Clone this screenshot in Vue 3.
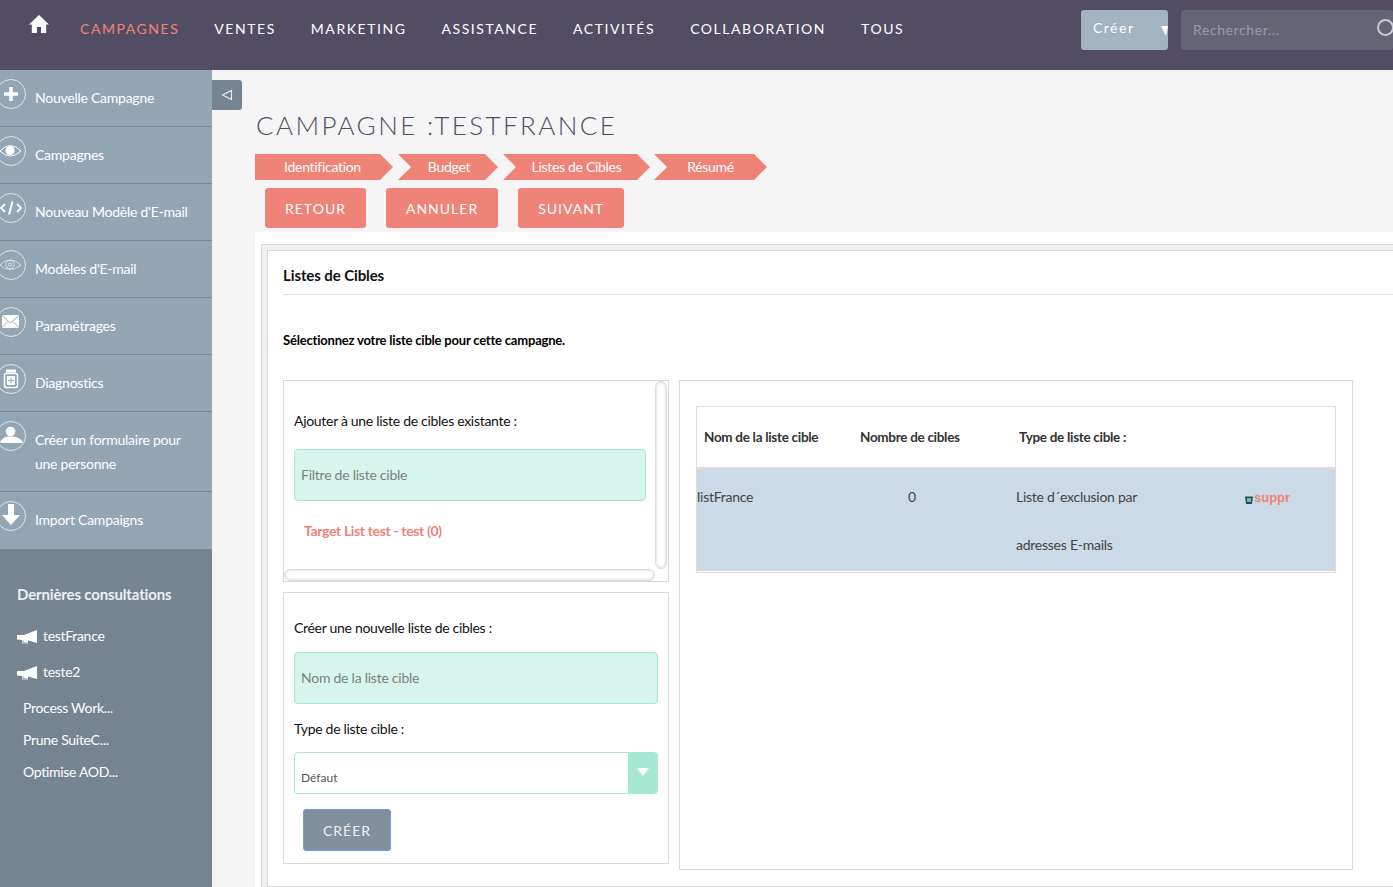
<template>
  <div class="page">
    <header class="topbar">
      <svg class="home" viewBox="0 0 20 18" width="20" height="18">
        <path d="M10 0 L20 9.5 H17.2 V18 H12 V12 H8 V18 H2.8 V9.5 H0 Z" fill="#fff" />
      </svg>
      <nav class="nav">
        <a v-for="(n, i) in navItems" :key="n" class="nav-link" :class="{ active: i === 0 }">{{ n }}</a>
      </nav>
      <div class="create-btn">
        <span>Créer</span>
        <i class="create-caret"></i>
      </div>
      <div class="search">
        <span>Rechercher...</span>
        <i class="search-ring"></i>
      </div>
    </header>

    <div class="body">
      <aside class="sidebar">
        <ul class="actions">
          <li v-for="a in actions" :key="a.label" class="action">
            <span class="action-icon">
              <svg viewBox="0 0 28 32" width="28" height="32" v-html="a.icon"></svg>
            </span>
            <span class="action-label">{{ a.label }}</span>
          </li>
        </ul>
        <div class="recent">
          <h3 class="recent-title">Dernières consultations</h3>
          <div v-for="r in recents" :key="r.label" class="recent-row" :class="{ plain: !r.icon }">
            <svg v-if="r.icon" class="horn" viewBox="0 0 21 14" width="21" height="14">
              <path d="M0 5 H7 L20 0 V13 L11 10.5 V13.5 H5 V10 L0 9.5 Z" fill="#fff" />
              <path d="M6 10.5 V12.8 H10.5" fill="none" stroke="#768390" stroke-width="0.8" />
            </svg>
            <span>{{ r.label }}</span>
          </div>
        </div>
      </aside>

      <main class="main">
        <button class="toggle">
          <svg viewBox="0 0 12 12" width="12" height="12">
            <path d="M10.5 1.5 V10.5 L1.5 6 Z" fill="none" stroke="#e8edf1" stroke-width="1.1" />
          </svg>
        </button>
        <h1 class="page-title">CAMPAGNE :TESTFRANCE</h1>
        <div class="steps">
          <span v-for="s in steps" :key="s.label" class="step" :class="s.cls">{{ s.label }}</span>
        </div>
        <div class="buttons">
          <button class="btn">RETOUR</button>
          <button class="btn">ANNULER</button>
          <button class="btn">SUIVANT</button>
        </div>

        <section class="sheet">
          <div class="frame">
            <div class="panel">
              <h2 class="panel-title">Listes de Cibles</h2>
              <p class="intro">Sélectionnez votre liste cible pour cette campagne.</p>
              <div class="columns">
                <div class="left-col">
                  <div class="box existing">
                    <label class="field-label first">Ajouter à une liste de cibles existante :</label>
                    <div class="text-field">Filtre de liste cible</div>
                    <a class="target-link">Target List test - test (0)</a>
                    <i class="scroll-v"></i>
                    <i class="scroll-h"></i>
                  </div>
                  <div class="box fresh">
                    <label class="field-label">Créer une nouvelle liste de cibles :</label>
                    <div class="text-field wide">Nom de la liste cible</div>
                    <label class="field-label type">Type de liste cible :</label>
                    <div class="select">
                      <span class="select-value">Défaut</span>
                      <span class="select-arrow"><i></i></span>
                    </div>
                    <button class="create-list">CRÉER</button>
                  </div>
                </div>
                <div class="box right-box">
                  <div class="table">
                    <div class="table-head">
                      <span class="th name">Nom de la liste cible</span>
                      <span class="th count">Nombre de cibles</span>
                      <span class="th type">Type de liste cible :</span>
                    </div>
                    <div class="table-row">
                      <span class="td name">listFrance</span>
                      <span class="td count">0</span>
                      <span class="td type">Liste d´exclusion par<br />adresses E-mails</span>
                      <span class="td remove">
                        <svg viewBox="0 0 8 8" width="8" height="8">
                          <path d="M0 0.5 H8 L7 8 H1 Z" fill="#0b5a58" />
                          <path d="M2 2 L6 6 M4 2 L6 4 M2 4 L4 6 M6 2 L2 6 M4 2 L2 4 M6 4 L4 6" stroke="#b9d6d4" stroke-width="0.7" />
                        </svg>
                        <a>suppr</a>
                      </span>
                    </div>
                  </div>
                </div>
              </div>
            </div>
          </div>
        </section>
      </main>
    </div>
  </div>
</template>

<script setup>
const navItems = ['CAMPAGNES', 'VENTES', 'MARKETING', 'ASSISTANCE', 'ACTIVITÉS', 'COLLABORATION', 'TOUS']

const ring = '<circle cx="12" cy="16" r="14.5" fill="none" stroke="#dfe5ea" stroke-width="1"/>'

const actions = [
  {
    label: 'Nouvelle Campagne',
    icon: ring + '<path d="M12 9 V23 M5 16 H19" stroke="#fff" stroke-width="3.6"/>',
  },
  {
    label: 'Campagnes',
    icon: ring + '<path d="M1 16 Q11 5 22 16 Q11 26 1 16 Z" fill="none" stroke="#fff" stroke-width="1"/><circle cx="11" cy="15.5" r="4.6" fill="#fff"/>',
  },
  {
    label: "Nouveau Modèle d'E-mail",
    icon: ring + '<path d="M6 12 L2 16 L6 20 M18 12 L22 16 L18 20" fill="none" stroke="#fff" stroke-width="2"/><path d="M13.5 9.5 L10 22.5" stroke="#fff" stroke-width="2"/>',
  },
  {
    label: "Modèles d'E-mail",
    icon: ring + '<path d="M1 16 Q11 6 22 16 Q11 25 1 16 Z" fill="none" stroke="#e6ebef" stroke-width="0.8"/><circle cx="11" cy="15.5" r="4.2" fill="none" stroke="#e6ebef" stroke-width="0.8"/><circle cx="11" cy="15.5" r="1.6" fill="none" stroke="#e6ebef" stroke-width="0.8"/>',
  },
  {
    label: 'Paramétrages',
    icon: ring + '<rect x="3" y="9" width="17" height="13" rx="1" fill="#fff"/><path d="M3 9.5 L11.5 17 L20 9.5 M3 21.5 L9 15.5 M20 21.5 L14 15.5" fill="none" stroke="#94a5b4" stroke-width="0.9"/>',
  },
  {
    label: 'Diagnostics',
    icon: ring + '<rect x="7" y="6.5" width="10" height="3" fill="#fff"/><rect x="5.5" y="10.5" width="13" height="14" rx="2" fill="none" stroke="#fff" stroke-width="1.5"/><rect x="8" y="13" width="8" height="9" fill="#fff"/><path d="M12 14.5 V20.5 M9 17.5 H15" stroke="#94a5b4" stroke-width="1"/>',
  },
  {
    label: 'Créer un formulaire pour une personne',
    icon: ring + '<circle cx="11.5" cy="11.5" r="4.8" fill="#fff"/><path d="M1 22 Q3 17.5 8.5 16.5 H15 Q21 17.5 24 22 Q24 23 22 23 H3 Q1 23 1 22 Z" fill="#fff"/>',
  },
  {
    label: 'Import Campaigns',
    icon: ring + '<path d="M9 4 H15 V15 H21 L12 25 L3 15 H9 Z" fill="#fff"/>',
  },
]

const recents = [
  { label: 'testFrance', icon: true },
  { label: 'teste2', icon: true },
  { label: 'Process Work...' },
  { label: 'Prune SuiteC...' },
  { label: 'Optimise AOD...' },
]

const steps = [
  { label: 'Identification', cls: 'first' },
  { label: 'Budget', cls: 'budget' },
  { label: 'Listes de Cibles', cls: 'lists' },
  { label: 'Résumé', cls: 'summary' },
]
</script>

<style>
html,
body {
  margin: 0;
  background: #f5f5f5;
  overflow: hidden;
}
</style>

<style scoped>
* {
  box-sizing: border-box;
}
.page {
  width: 1393px;
  height: 887px;
  overflow: hidden;
  font-family: Lato, "Open Sans", sans-serif;
  font-size: 14px;
  color: #222;
  display: flex;
  flex-direction: column;
}
.topbar {
  height: 70px;
  flex: none;
  background: #534d64;
  display: flex;
  align-items: flex-start;
  padding-left: 29px;
}
.home {
  margin-top: 15px;
}
.nav {
  display: flex;
  gap: 35px;
  margin-left: 31px;
  margin-top: 20px;
  width: 1001px;
}
.nav-link {
  color: #fff;
  font-size: 14px;
  line-height: 17px;
  letter-spacing: 1.55px;
  white-space: nowrap;
}
.nav-link.active {
  color: #f08377;
}
.create-btn {
  position: relative;
  width: 87px;
  height: 40px;
  margin-top: 10px;
  background: #a3b3bf;
  border-radius: 3px;
  color: #fff;
  font-size: 14px;
  letter-spacing: 1.5px;
  line-height: 36px;
  padding-left: 12px;
}
.create-caret {
  position: absolute;
  right: 0;
  top: 16px;
  width: 0;
  height: 0;
  border-left: 5px solid transparent;
  border-right: 2px solid transparent;
  border-top: 10px solid #fff;
}
.search {
  position: relative;
  width: 212px;
  height: 40px;
  margin-top: 10px;
  margin-left: 13px;
  background: #646574;
  border-radius: 3px;
  color: #9b98ac;
  font-size: 14px;
  letter-spacing: 0.6px;
  line-height: 40px;
  padding-left: 12px;
  overflow: hidden;
}
.search-ring {
  position: absolute;
  left: 196px;
  top: 9px;
  width: 17px;
  height: 17px;
  border: 2px solid #c9c9d0;
  border-radius: 50%;
}
.body {
  flex: 1;
  display: flex;
  min-height: 0;
}
.sidebar {
  width: 212px;
  flex: none;
  display: flex;
  flex-direction: column;
  background: #768390;
}
.actions {
  list-style: none;
  margin: 0;
  padding: 0;
  background: #94a5b4;
}
.action {
  position: relative;
  min-height: 57px;
  padding: 16px 8px 15px 35px;
  border-bottom: 1px solid #788895;
  color: #fff;
  font-size: 14px;
  line-height: 24px;
  letter-spacing: -0.25px;
}
.action:last-child {
  border-bottom: 0;
  height: 57px;
}
.action-icon {
  position: absolute;
  left: -1px;
  top: 8px;
  line-height: 0;
}
.action-icon svg {
  overflow: visible;
}
.recent {
  flex: 1;
  padding: 36px 0 0 17px;
}
.recent-title {
  margin: 0 0 23px;
  color: #edf0f2;
  font-size: 15px;
  line-height: 18px;
  font-weight: 700;
  letter-spacing: -0.15px;
}
.recent-row {
  display: flex;
  align-items: center;
  gap: 5px;
  height: 18px;
  margin-bottom: 18px;
  color: #fff;
  font-size: 14px;
  letter-spacing: -0.3px;
}
.recent-row.plain {
  padding-left: 6px;
  margin-bottom: 14px;
}
.horn {
  margin-top: 3px;
}
.main {
  position: relative;
  flex: 1;
  min-width: 0;
  background: #f5f5f5;
  padding-left: 43px;
}
.toggle {
  position: absolute;
  left: 0;
  top: 10px;
  width: 30px;
  height: 30px;
  padding: 0;
  border: 0;
  background: #768390;
  border-radius: 0 3px 3px 0;
  display: flex;
  align-items: center;
  justify-content: center;
}
.page-title {
  margin: 0;
  padding: 37px 0 0 1px;
  height: 84px;
  color: #534d64;
  font-size: 26px;
  line-height: 36px;
  font-weight: 300;
  letter-spacing: 2.4px;
  white-space: nowrap;
}
.steps {
  display: flex;
  height: 26px;
  color: #fff;
  font-size: 14px;
  line-height: 26px;
  letter-spacing: -0.3px;
}
.step {
  background: #f08377;
  text-align: center;
  clip-path: polygon(0 0, calc(100% - 13px) 0, 100% 50%, calc(100% - 13px) 100%, 0 100%, 13px 50%);
}
.step.first {
  width: 138px;
  padding-right: 3px;
  clip-path: polygon(0 0, calc(100% - 13px) 0, 100% 50%, calc(100% - 13px) 100%, 0 100%);
}
.step.budget {
  width: 100px;
  margin-left: 5px;
  padding-left: 2px;
}
.step.lists {
  width: 147px;
  margin-left: 5px;
}
.step.summary {
  width: 113px;
  margin-left: 4px;
}
.buttons {
  display: flex;
  gap: 20px;
  padding: 8px 0 4px 10px;
}
.btn {
  height: 40px;
  padding: 0 20px;
  border: 0;
  border-radius: 3px;
  background: #f08377;
  color: #fff;
  font-family: inherit;
  font-size: 14px;
  letter-spacing: 1px;
}
.sheet {
  background: #fff;
  height: 655px;
  padding: 12px 0 0 6px;
}
.frame {
  height: 643px;
  width: 1200px;
  border: 1px solid #d8d8d8;
  border-bottom: 0;
  background: #f0f0f0;
  padding: 5px 0 0 5px;
}
.panel {
  height: 637px;
  background: #fff;
  border: 1px solid #d8d8d8;
  padding: 0 0 0 15px;
}
.panel-title {
  margin: 0;
  height: 44px;
  width: 1200px;
  border-bottom: 1px solid #ddd;
  color: #111;
  font-size: 15px;
  line-height: 49px;
  font-weight: 700;
  letter-spacing: -0.1px;
}
.intro {
  margin: 0;
  height: 85px;
  padding-top: 37px;
  color: #000;
  font-size: 13px;
  line-height: 16px;
  font-weight: 700;
  letter-spacing: -0.2px;
}
.columns {
  display: flex;
  gap: 10px;
  align-items: flex-start;
}
.left-col {
  width: 386px;
  display: flex;
  flex-direction: column;
  gap: 10px;
}
.box {
  position: relative;
  background: #fff;
  border: 1px solid #d8d8d8;
}
.existing {
  height: 202px;
  padding: 31px 0 0 10px;
}
.fresh {
  height: 272px;
  padding: 26px 10px 0 10px;
}
.field-label {
  display: block;
  color: #111;
  font-size: 14px;
  line-height: 17px;
  letter-spacing: -0.3px;
}
.field-label.type {
  margin-top: 16px;
}
.text-field {
  width: 352px;
  height: 52px;
  margin-top: 20px;
  padding-left: 6px;
  background: #d8f5ed;
  border: 1px solid #a5e8d3;
  border-radius: 4px;
  color: #7a8380;
  font-size: 14px;
  line-height: 50px;
  letter-spacing: -0.25px;
}
.text-field.wide {
  width: 364px;
  margin-top: 16px;
}
.target-link {
  display: block;
  margin: 21px 0 0 10px;
  color: #f08377;
  font-size: 14px;
  line-height: 17px;
  font-weight: 700;
  letter-spacing: -0.35px;
}
.scroll-v {
  position: absolute;
  left: 371px;
  top: 0;
  width: 12px;
  height: 188px;
  background: #fff;
  border: 1px solid #ddd;
  border-radius: 6px;
  box-shadow: inset 0 0 3px rgba(0, 0, 0, 0.2);
}
.scroll-h {
  position: absolute;
  left: 0;
  top: 188px;
  width: 371px;
  height: 12px;
  background: #fff;
  border: 1px solid #ddd;
  border-radius: 6px;
  box-shadow: inset 0 0 3px rgba(0, 0, 0, 0.2);
}
.select {
  display: flex;
  width: 364px;
  height: 42px;
  margin-top: 15px;
  border: 1px solid #a5e8d3;
  border-radius: 4px;
  background: #fff;
}
.select-value {
  flex: 1;
  padding: 17px 0 0 6px;
  color: #555;
  font-size: 12px;
  line-height: 15px;
}
.select-arrow {
  width: 29px;
  background: #a5e8d3;
  display: flex;
  justify-content: center;
  padding-top: 15px;
}
.select-arrow i {
  width: 0;
  height: 0;
  border-left: 6px solid transparent;
  border-right: 6px solid transparent;
  border-top: 8px solid #fff;
}
.create-list {
  display: block;
  width: 88px;
  height: 42px;
  margin: 15px 0 0 9px;
  border: 1px solid #6f9ae8;
  border-radius: 3px;
  background: #828f9c;
  color: #eef1f3;
  font-family: inherit;
  font-size: 14px;
  letter-spacing: 1px;
}
.right-box {
  width: 674px;
  height: 490px;
  padding: 25px 0 0 16px;
}
.table {
  width: 640px;
  height: 167px;
  border: 1px solid #ddd;
}
.table-head {
  position: relative;
  height: 62px;
  border-bottom: 2px solid #ddd;
}
.th {
  position: absolute;
  top: 22px;
  color: #333;
  font-size: 13.5px;
  line-height: 17px;
  font-weight: 700;
  letter-spacing: -0.3px;
  white-space: nowrap;
}
.th.name {
  left: 7px;
}
.th.count {
  left: 163px;
}
.th.type {
  left: 322px;
}
.table-row {
  position: relative;
  height: 102px;
  background: #ccd9e6;
}
.td {
  position: absolute;
  top: 4px;
  color: #444;
  font-size: 14px;
  line-height: 48px;
  letter-spacing: -0.25px;
  white-space: nowrap;
}
.td.name {
  left: 0;
}
.td.count {
  left: 211px;
}
.td.type {
  left: 319px;
}
.td.remove {
  left: 548px;
}
.td.remove a {
  color: #f08377;
  font-family: "Liberation Sans", sans-serif;
  font-weight: 700;
  font-size: 13px;
  letter-spacing: 0;
  margin-left: 1px;
}
.td.remove svg {
  position: relative;
  top: 2px;
}
</style>
